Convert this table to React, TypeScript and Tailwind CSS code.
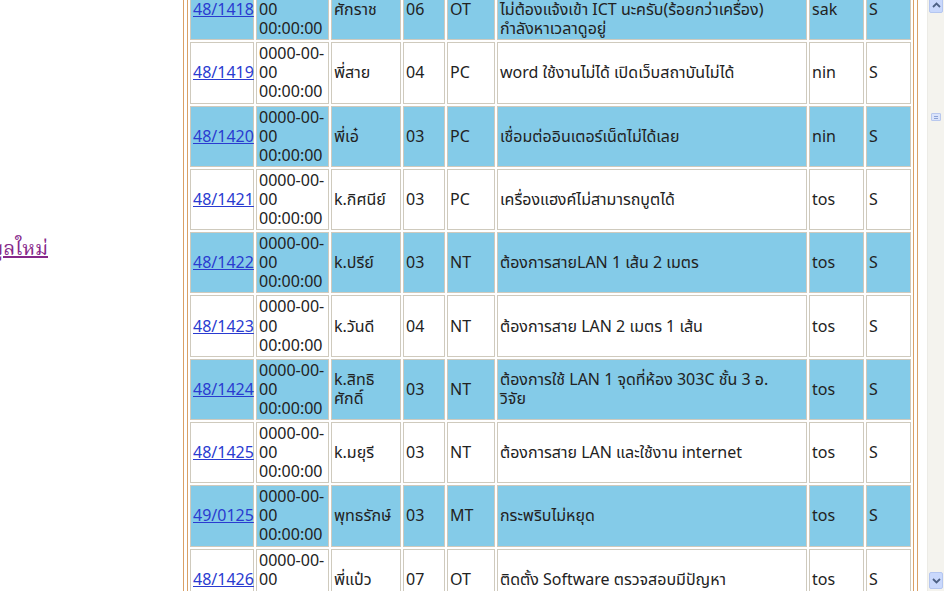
const ROWS = [
  { id: "48/1418", name: "ศักราช", code: "06", type: "OT", desc: ["", "ไม่ต้องแจ้งเข้า ICT นะครับ(ร้อยกว่าเครื่อง)", "กำลังหาเวลาดูอยู่"], by: "sak" },
  { id: "48/1419", name: "พี่สาย", code: "04", type: "PC", desc: ["word ใช้งานไม่ได้ เปิดเว็บสถาบันไม่ได้"], by: "nin" },
  { id: "48/1420", name: "พี่เอ๋", code: "03", type: "PC", desc: ["เชื่อมต่ออินเตอร์เน็ตไม่ได้เลย"], by: "nin" },
  { id: "48/1421", name: "k.กิศนีย์", code: "03", type: "PC", desc: ["เครื่องแฮงค์ไม่สามารถบูตได้"], by: "tos" },
  { id: "48/1422", name: "k.ปรีย์", code: "03", type: "NT", desc: ["ต้องการสายLAN 1 เส้น 2 เมตร"], by: "tos" },
  { id: "48/1423", name: "k.วันดี", code: "04", type: "NT", desc: ["ต้องการสาย LAN 2 เมตร 1 เส้น"], by: "tos" },
  { id: "48/1424", name: "k.สิทธิ|ศักดิ์", code: "03", type: "NT", desc: ["ต้องการใช้ LAN 1 จุดที่ห้อง 303C ชั้น 3 อ.", "วิจัย"], by: "tos" },
  { id: "48/1425", name: "k.มยุรี", code: "03", type: "NT", desc: ["ต้องการสาย LAN และใช้งาน internet"], by: "tos" },
  { id: "49/0125", name: "พุทธรักษ์", code: "03", type: "MT", desc: ["กระพริบไม่หยุด"], by: "tos" },
  { id: "48/1426", name: "พี่แป๋ว", code: "07", type: "OT", desc: ["ติดตั้ง Software ตรวจสอบมีปัญหา"], by: "tos" },
];

const td = "border border-[#cfcabd] px-[2px] py-[1px] align-middle";

function Lines({ parts }: { parts: string[] }) {
  return (
    <>
      {parts.map((p, i) => (
        <span key={i}>
          {i > 0 && <br />}
          {p}
        </span>
      ))}
    </>
  );
}

function Scrollbar() {
  return (
    <div className="w-[17px] h-full bg-[#f4f3ee] flex flex-col justify-between border-l border-[#ecebe6]">
      <div className="-mt-[4px] h-[17px] mx-[1px] rounded-[2px] bg-[#c9d8fc] border border-[#b4c6f0] flex items-center justify-center">
        <svg width="9" height="6" viewBox="0 0 9 6">
          <path d="M1 5 L4.5 1.5 L8 5" fill="none" stroke="#4d6185" strokeWidth="1.8" />
        </svg>
      </div>
      <div className="flex-1 flex flex-col pt-[100px]">
        <div className="mx-[3px] h-[8px] rounded-[1px] bg-[#dbe4fb] border border-[#b9c8ee] flex flex-col justify-center gap-[1px] px-[2px]">
          <div className="h-px bg-[#8da3d6]" />
          <div className="h-px bg-[#8da3d6]" />
        </div>
      </div>
      <div className="mb-[2px] h-[17px] mx-[1px] rounded-[2px] bg-[#c9d8fc] border border-[#b4c6f0] flex items-center justify-center">
        <svg width="9" height="6" viewBox="0 0 9 6">
          <path d="M1 1 L4.5 4.5 L8 1" fill="none" stroke="#4d6185" strokeWidth="1.8" />
        </svg>
      </div>
    </div>
  );
}

export default function App() {
  return (
    <div
      className="w-[944px] h-[591px] overflow-hidden bg-white flex text-[16px] leading-[19.1px] text-[#222]"
      style={{ fontFamily: '"Noto Sans", "Noto Sans Thai", Tahoma, sans-serif' }}
    >
      {/* left column with the cut-off link */}
      <div className="w-[183px] shrink-0 pt-[239px]">
        <div className="w-[48px] flex justify-end whitespace-nowrap">
          <a
            href="#"
            className="text-[#86288a] underline text-[20px] leading-[22px]"
            style={{ fontFamily: '"Norasi", "Noto Serif Thai", "Liberation Serif", serif' }}
          >
            เพิ่มข้อมูลใหม่
          </a>
        </div>
      </div>

      {/* framed table */}
      <div className="w-[735px] shrink-0 border-x border-[#d9a066] px-[3px] -mt-[24px]">
        <table className="table-fixed border-separate border-spacing-[2px] border border-[#d9a066] w-[727px]">
          <colgroup>
            <col className="w-[64px]" />
            <col className="w-[73px]" />
            <col className="w-[70px]" />
            <col className="w-[42px]" />
            <col className="w-[48px]" />
            <col className="w-[310px]" />
            <col className="w-[55px]" />
            <col className="w-[45px]" />
          </colgroup>
          <tbody>
            {ROWS.map((r, i) => (
              <tr key={r.id} className={i % 2 === 0 ? "bg-[#84cbe8]" : "bg-white"}>
                <td className={td}>
                  <a href="#" className="text-[#2a3bd0] underline">
                    {r.id}
                  </a>
                </td>
                <td className={td}>0000-00-00 00:00:00</td>
                <td className={td}>
                  <Lines parts={r.name.split("|")} />
                </td>
                <td className={td}>{r.code}</td>
                <td className={td}>{r.type}</td>
                <td className={td}>
                  <Lines parts={r.desc} />
                </td>
                <td className={td}>{r.by}</td>
                <td className={td}>S</td>
              </tr>
            ))}
          </tbody>
        </table>
      </div>

      <div className="flex-1" />
      <Scrollbar />
    </div>
  );
}
